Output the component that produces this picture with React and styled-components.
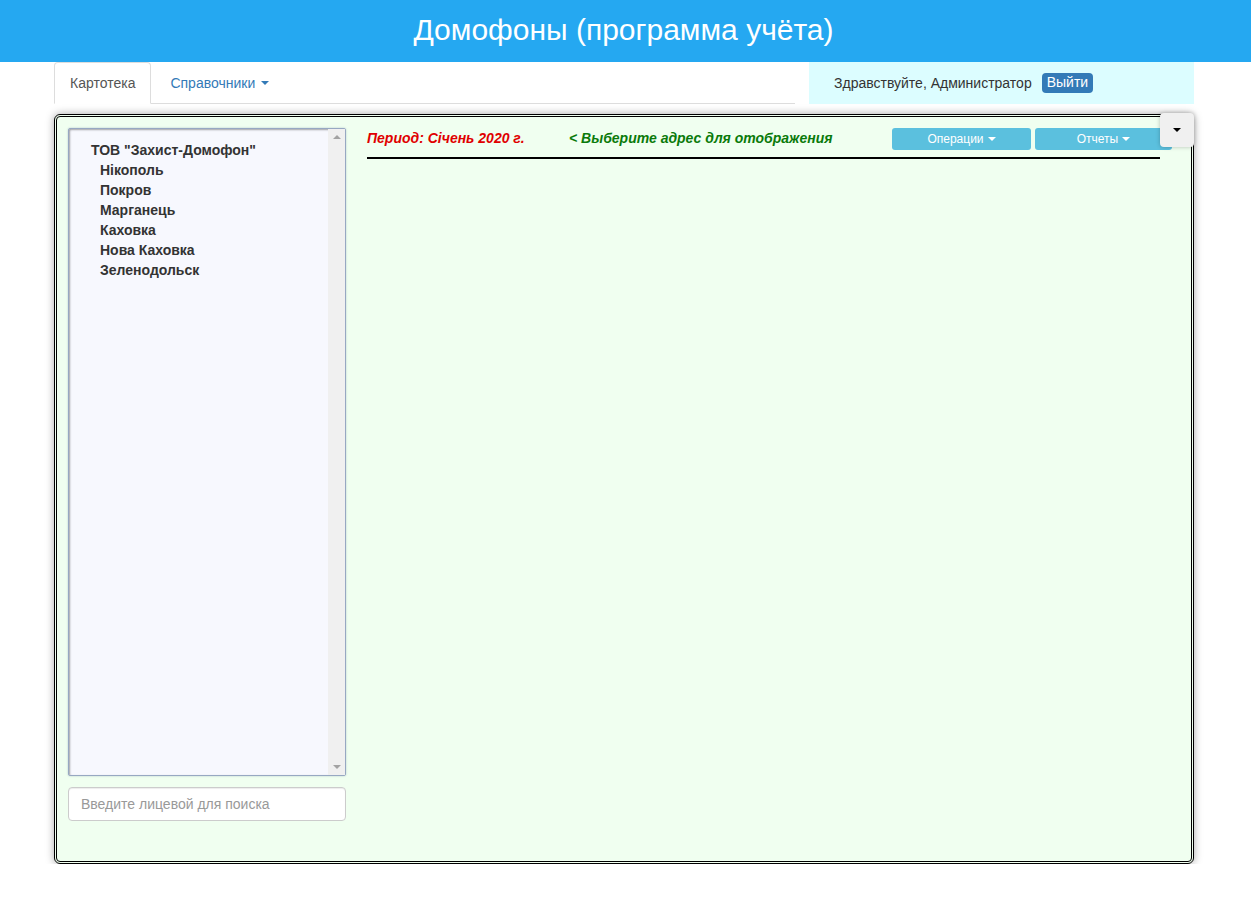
import React from 'react';
import styled, { createGlobalStyle } from 'styled-components';

const GlobalStyle = createGlobalStyle`
  html, body {
    margin: 0;
    padding: 0;
    background: #fff;
    font-family: "Liberation Sans", Arial, Helvetica, sans-serif;
    font-size: 14px;
    color: #333;
  }
  * { box-sizing: border-box; }
`;

const Header = styled.header`
  height: 62px;
  background: #25a8f1;
  color: #fff;
  display: flex;
  align-items: center;
  justify-content: center;
  font-size: 30px;
  padding-bottom: 2px;
  padding-right: 4px;
`;

const Container = styled.div`
  width: 1140px;
  margin: 0 0 0 54px;
`;

const NavRow = styled.div`
  display: grid;
  grid-template-columns: 741px 1fr;
  column-gap: 14px;
  height: 42px;
`;

const Tabs = styled.ul`
  list-style: none;
  margin: 0;
  padding: 0;
  display: flex;
  align-items: flex-end;
  border-bottom: 1px solid #ddd;
  height: 42px;
`;

const Tab = styled.li`
  height: 42px;
  margin-bottom: -1px;
  display: flex;
  align-items: center;
  border: 1px solid ${({ $active }) => ($active ? '#ddd' : 'transparent')};
  border-bottom-color: ${({ $active }) => ($active ? '#fff' : 'transparent')};
  border-radius: 4px 4px 0 0;
  background: ${({ $active }) => ($active ? '#fff' : 'transparent')};
  color: ${({ $active }) => ($active ? '#555' : '#337ab7')};
  padding: 0 15px 0 ${({ $active }) => ($active ? '15px' : '18px')};
`;

const Caret = styled.span`
  display: inline-block;
  width: 0;
  height: 0;
  margin-left: ${({ $gap }) => $gap || 0}px;
  border-top: 4px solid ${({ $color }) => $color || 'currentColor'};
  border-left: 4px solid transparent;
  border-right: 4px solid transparent;
  vertical-align: middle;
`;

const UserPanel = styled.div`
  background: #dcfdff;
  display: flex;
  align-items: center;
  padding-left: 25px;
  gap: 10px;
  color: #333;
`;

const LogoutButton = styled.span`
  background: #337ab7;
  color: #fff;
  border-radius: 4px;
  padding: 1px 5px 2px;
  line-height: 17px;
`;

const MainBox = styled.div`
  position: relative;
  margin-top: 10px;
  height: 750px;
  border: 3px double #000;
  border-radius: 6px;
  background: #f0fff0;
  box-shadow: 0 0 8px rgba(0, 0, 0, 0.35);
  padding: 11px 19px 0 11px;
  display: flex;
  gap: 21px;
`;

const ToggleButton = styled.div`
  position: absolute;
  top: -4px;
  right: -3px;
  width: 34px;
  height: 34px;
  background: #f0f0f0;
  border-radius: 4px;
  box-shadow: 0 0 4px rgba(0, 0, 0, 0.25);
  display: flex;
  align-items: center;
  justify-content: center;
`;

const LeftColumn = styled.div`
  width: 278px;
  display: flex;
  flex-direction: column;
  gap: 11px;
`;

const TreeBox = styled.div`
  height: 648px;
  display: flex;
  background: #f7f8fe;
  border: 1px solid #97a8c2;
  border-radius: 2px;
  box-shadow: inset 1px 1px 2px rgba(0, 0, 0, 0.35), 0 0 2px rgba(90, 110, 150, 0.4);
`;

const TreeList = styled.ul`
  flex: 1;
  list-style: none;
  margin: 0;
  padding: 11px 0 0 22px;
`;

const TreeItem = styled.li`
  font-weight: bold;
  line-height: 20px;
  color: #333;
  padding-left: ${({ $level }) => $level * 9}px;
`;

const ScrollTrack = styled.div`
  width: 17px;
  background: #f0f0f0;
  display: flex;
  flex-direction: column;
  justify-content: space-between;
  align-items: center;
  padding: 6px 0;
`;

const Arrow = styled.span`
  width: 0;
  height: 0;
  border-left: 4px solid transparent;
  border-right: 4px solid transparent;
  ${({ $up }) => ($up ? 'border-bottom: 4px solid #a3a3a3;' : 'border-top: 4px solid #a3a3a3;')}
`;

const SearchInput = styled.input`
  height: 34px;
  width: 278px;
  border: 1px solid #ccc;
  border-radius: 4px;
  padding: 6px 12px;
  font-family: inherit;
  font-size: 14px;
  background: #fff;
  box-shadow: inset 0 1px 1px rgba(0, 0, 0, 0.075);
  &::placeholder { color: #999; }
`;

const RightColumn = styled.div`
  flex: 1;
  display: flex;
  flex-direction: column;
`;

const InfoRow = styled.div`
  height: 22px;
  display: flex;
  align-items: center;
`;

const InfoText = styled.span`
  font-weight: bold;
  font-style: italic;
  font-size: 14px;
  line-height: 18px;
  margin-top: -2px;
  color: ${({ $color }) => $color};
  width: ${({ $width }) => $width || 'auto'};
`;

const Buttons = styled.div`
  margin-left: auto;
  display: flex;
  gap: 4px;
`;

const InfoButton = styled.span`
  width: ${({ $width }) => $width}px;
  height: 22px;
  background: #5bc0de;
  border-radius: 3px;
  color: #fff;
  font-size: 12px;
  display: flex;
  align-items: center;
  justify-content: center;
`;

const Rule = styled.div`
  margin-top: 7px;
  margin-right: 12px;
  height: 2px;
  background: #000;
`;

const cities = ['Нікополь', 'Покров', 'Марганець', 'Каховка', 'Нова Каховка', 'Зеленодольск'];

export default function App() {
  return (
    <>
      <GlobalStyle />
      <Header>Домофоны (программа учёта)</Header>
      <Container>
        <NavRow>
          <Tabs>
            <Tab $active>Картотека</Tab>
            <Tab>
              Справочники <Caret $gap={6} />
            </Tab>
          </Tabs>
          <UserPanel>
            Здравствуйте, Администратор
            <LogoutButton>Выйти</LogoutButton>
          </UserPanel>
        </NavRow>

        <MainBox>
          <LeftColumn>
            <TreeBox>
              <TreeList>
                <TreeItem $level={0}>ТОВ "Захист-Домофон"</TreeItem>
                {cities.map((c) => (
                  <TreeItem key={c} $level={1}>{c}</TreeItem>
                ))}
              </TreeList>
              <ScrollTrack>
                <Arrow $up />
                <Arrow />
              </ScrollTrack>
            </TreeBox>
            <SearchInput placeholder="Введите лицевой для поиска" />
          </LeftColumn>

          <RightColumn>
            <InfoRow>
              <InfoText $color="#e00000" $width="202px">Период: Січень 2020 г.</InfoText>
              <InfoText $color="#0a7a0a">&lt; Выберите адрес для отображения</InfoText>
              <Buttons>
                <InfoButton $width={139}>
                  Операции <Caret $gap={4} />
                </InfoButton>
                <InfoButton $width={137}>
                  Отчеты <Caret $gap={4} />
                </InfoButton>
              </Buttons>
            </InfoRow>
            <Rule />
          </RightColumn>

          <ToggleButton>
            <Caret $color="#000" />
          </ToggleButton>
        </MainBox>
      </Container>
    </>
  );
}
